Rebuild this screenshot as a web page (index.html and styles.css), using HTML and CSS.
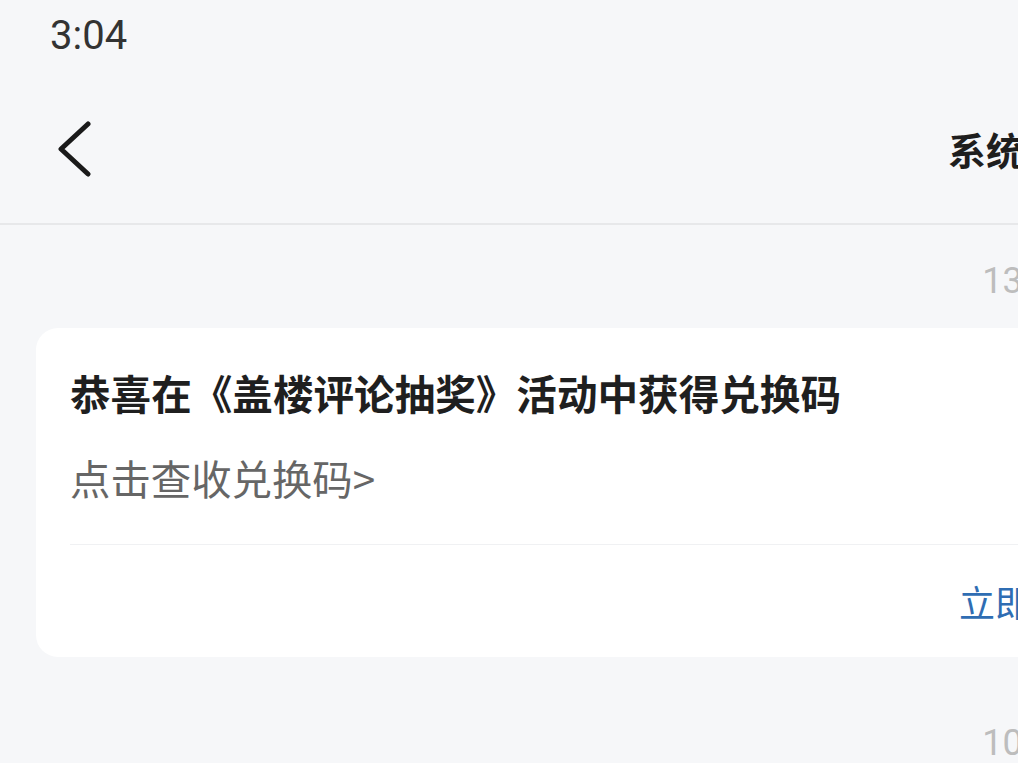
FILE: index.html
```html
<!DOCTYPE html>
<html lang="zh-CN">
<head>
<meta charset="utf-8">
<title>系统通知</title>
<link rel="stylesheet" href="styles.css">
</head>
<body>
<div class="screen">
  <div class="status"><span class="clock">3:04</span></div>
  <header class="nav">
    <div class="nav-left">
      <svg class="back" width="40" height="60" viewBox="0 0 40 60" aria-hidden="true">
        <path d="M30 5 L3 30 L30 55" fill="none" stroke="#1a1a1a" stroke-width="5" stroke-linecap="round" stroke-linejoin="round"/>
      </svg>
    </div>
    <h1 class="nav-title">系统通知</h1>
    <div class="nav-right"></div>
  </header>
  <main class="feed">
    <div class="stamp">13:21</div>
    <section class="card">
      <h2 class="card-title">恭喜在《盖楼评论抽奖》活动中获得兑换码</h2>
      <p class="card-sub">点击查收兑换码&gt;</p>
      <div class="card-divider"></div>
      <div class="card-foot"><a class="card-link">立即查看</a></div>
    </section>
    <div class="stamp stamp-next">10:48</div>
  </main>
</div>
</body>
</html>
```
FILE: styles.css
```css
html, body {
  margin: 0;
  padding: 0;
  background: #f6f7f9;
  overflow: hidden;
}

body {
  width: 1018px;
  height: 763px;
  font-family: "Noto Sans CJK SC", "Noto Sans", sans-serif;
}

.screen {
  width: 2048px;
}

.status {
  box-sizing: border-box;
  height: 82px;
  padding: 16px 0 0 50px;
}

.clock {
  font-family: Roboto, "Noto Sans", sans-serif;
  font-size: 40px;
  line-height: 40px;
  color: #333333;
  display: block;
}

.nav {
  box-sizing: border-box;
  height: 143px;
  display: grid;
  grid-template-columns: 1fr auto 1fr;
  align-items: center;
  padding-bottom: 8px;
  border-bottom: 2px solid #e7e8ea;
}

.nav-left {
  padding-left: 58px;
  display: flex;
  align-items: center;
}

.back {
  display: block;
}

.nav-title {
  margin: 0;
  font-size: 38px;
  line-height: 50px;
  font-weight: 700;
  color: #1e1e1e;
}

.feed {
  padding: 0 36px;
}

.stamp {
  box-sizing: border-box;
  height: 103px;
  padding-top: 36px;
  padding-left: 6px;
  text-align: center;
  font-family: Roboto, "Noto Sans", sans-serif;
  font-size: 36px;
  line-height: 40px;
  color: #bdbdbd;
}

.stamp-next {
  padding-top: 66px;
  height: auto;
}

.card {
  background: #ffffff;
  border-radius: 22px;
  padding: 40px 34px 0;
}

.card-title {
  margin: 0;
  font-size: 40.6px;
  line-height: 50px;
  font-weight: 700;
  color: #1f1f1f;
}

.card-sub {
  margin: 35px 0 0;
  font-size: 40.4px;
  line-height: 50px;
  color: #666666;
}

.card-divider {
  margin-top: 41px;
  height: 1px;
  background: #f0f1f3;
}

.card-foot {
  height: 112px;
  display: flex;
  align-items: center;
  justify-content: center;
  padding-left: 14px;
}

.card-link {
  font-size: 36px;
  line-height: 50px;
  color: #2f6db3;
}
```
